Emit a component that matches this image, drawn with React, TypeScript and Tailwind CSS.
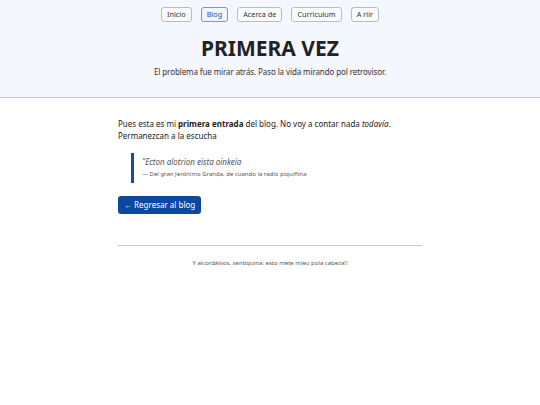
import React from "react";

const font = { fontFamily: '"Noto Sans", "Open Sans", sans-serif' };

export default function App() {
  const nav = ["Inicio", "Blog", "Acerca de", "Curriculum", "A riir"];
  return (
    <div className="min-h-[405px] bg-white text-[#222]" style={font}>
      <header className="bg-[#f5f7fe] border-b border-[#c8c6d4] pt-[7px] pb-[20px] flex flex-col items-center">
        <nav className="flex gap-[9px]">
          {nav.map((n) => (
            <span
              key={n}
              className={
                "h-[15px] px-[5px] flex items-center text-[7.3px] rounded-[3px] border " +
                (n === "Blog"
                  ? "border-[#7d97c9] text-[#1d4fa0] bg-[#f0f4fd]"
                  : "border-[#b9bcc6] text-[#333] bg-[#fafbfe]")
              }
            >
              {n}
            </span>
          ))}
        </nav>
        <h1 className="mt-[13px] text-[21px] font-bold leading-[26px] text-[#222]">PRIMERA VEZ</h1>
        <p className="mt-[5px] text-[8px] leading-[11px] tracking-[-0.1px] text-[#333]">
          El problema fue mirar atrás. Paso la vida mirando pol retrovisor.
        </p>
      </header>
      <main className="w-[304px] mx-auto pt-[20px]">
        <p className="text-[8px] leading-[12px] text-[#222]">
          Pues esta es mi <strong className="font-bold">primera entrada</strong> del blog. No voy a contar nada{" "}
          <em>todavía</em>.<br />
          Permanezcan a la escucha
        </p>
        <blockquote className="mt-[11px] ml-[13px] border-l-[3px] border-[#1b4a9a] pl-[8px] pt-[3px] pb-[4px]">
          <p className="italic text-[8px] leading-[12px] text-[#555]">"Ecton alotrion eista oinkeia</p>
          <p className="mt-[1px] text-[6px] leading-[10px] text-[#555]">
            — Del gran Jerónimo Granda, de cuando la radio piquiñina
          </p>
        </blockquote>
        <button className="mt-[13px] h-[18px] px-[6px] bg-[#0d47a1] text-white text-[8px] rounded-[3px] flex items-center">
          ← Regresar al blog
        </button>
        <hr className="mt-[31px] border-t border-[#c9c9c9]" />
        <p className="mt-[13px] text-center text-[6px] text-[#555]">
          Y alcordáivos, xentiquina: esto mete mieu pola cabeza!!
        </p>
      </main>
    </div>
  );
}
